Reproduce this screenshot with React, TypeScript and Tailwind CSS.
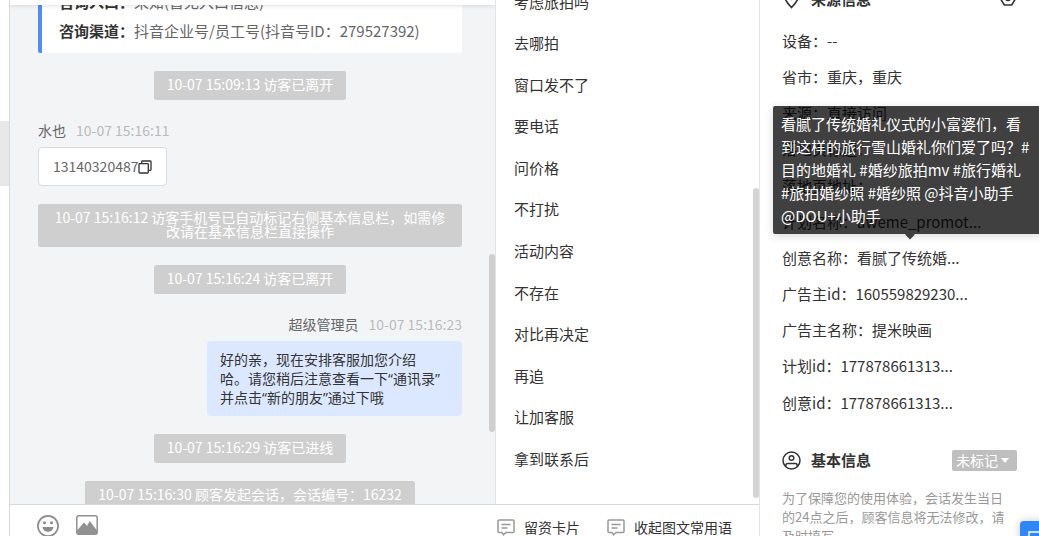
import React from "react";

const phrases = [
  "考虑旅拍吗",
  "去哪拍",
  "窗口发不了",
  "要电话",
  "问价格",
  "不打扰",
  "活动内容",
  "不存在",
  "对比再决定",
  "再追",
  "让加客服",
  "拿到联系后",
];

const sourceInfo = [
  ["设备：", "--"],
  ["省市：", "重庆，重庆"],
  ["来源：", "直接访问"],
  ["落地页标题：", ""],
  ["落地页地址：", "..."],
  ["计划名称：", "aweme_promot..."],
  ["创意名称：", "看腻了传统婚..."],
  ["广告主id：", "160559829230..."],
  ["广告主名称：", "提米映画"],
  ["计划id：", "177878661313..."],
  ["创意id：", "177878661313..."],
];

const tooltipLines = [
  "看腻了传统婚礼仪式的小富婆们，看",
  "到这样的旅行雪山婚礼你们爱了吗？#",
  "目的地婚礼 #婚纱旅拍mv #旅行婚礼",
  "#旅拍婚纱照 #婚纱照 @抖音小助手",
  "@DOU+小助手",
];

function SystemNote({ children }: { children: React.ReactNode }) {
  return (
    <p className="self-center rounded-[2px] bg-[#cfcfcf] px-[13px] pt-[6px] pb-[9px] text-center text-sm leading-[14px] text-white">
      {children}
    </p>
  );
}

function Quoted({ children }: { children: React.ReactNode }) {
  return (
    <>
      <span className="font-['Open_Sans',sans-serif]">“</span>
      {children}
      <span className="font-['Open_Sans',sans-serif]">”</span>
    </>
  );
}

function CopyIcon() {
  return (
    <svg width="14" height="14" viewBox="0 0 14 14" fill="none" stroke="#333" strokeWidth="1.3" aria-hidden="true">
      <rect x="1" y="3.7" width="9.3" height="9.3" rx="0.8" />
      <path d="M3.7 3.5V1.8a.8.8 0 0 1 .8-.8h7.7a.8.8 0 0 1 .8.8v7.7a.8.8 0 0 1-.8.8h-1.7" />
    </svg>
  );
}

function SmileIcon() {
  return (
    <svg width="22" height="22" viewBox="0 0 22 22" aria-hidden="true">
      <circle cx="11" cy="11" r="10.1" fill="none" stroke="#8c8c8c" strokeWidth="1.7" />
      <circle cx="7.5" cy="7.8" r="1.5" fill="#8c8c8c" />
      <circle cx="14.5" cy="7.8" r="1.5" fill="#8c8c8c" />
      <path d="M5.5 12h11c-.4 3-2.600 4.700-5.500 4.700S5.900 15 5.500 12z" fill="#8c8c8c" />
    </svg>
  );
}

function PictureIcon() {
  return (
    <svg width="22" height="20" viewBox="0 0 22 20" aria-hidden="true">
      <rect x="0.8" y="0.8" width="20.4" height="18.4" rx="2" fill="none" stroke="#919191" strokeWidth="1.500" />
      <path d="M1 15.500 8 7.500l3 3.500L13.800 6 21 15.500V18a1 1 0 0 1-1 1H2a1 1 0 0 1-1-1z" fill="#919191" />
    </svg>
  );
}

function CardIcon() {
  return (
    <svg width="18" height="17" viewBox="0 0 18 17" fill="none" stroke="#999" strokeWidth="1.500" aria-hidden="true">
      <path d="M2 1h14a1 1 0 0 1 1 1v10.500a1 1 0 0 1-1 1H9L6.500 15.800 5 13.500H2a1 1 0 0 1-1-1V2a1 1 0 0 1 1-1z" />
      <path d="M4.500 5.500h9M4.500 9h6" />
    </svg>
  );
}

function PinIcon() {
  return (
    <svg width="18" height="20" viewBox="0 0 18 20" fill="none" stroke="#333" strokeWidth="1.700" aria-hidden="true">
      <path d="M9.500 18.500C6.500 15.500 3 12 3 8a6.500 6.500 0 0 1 13 0c0 4-3.500 7.500-6.500 10.500z" />
      <circle cx="9.500" cy="8" r="2.300" />
    </svg>
  );
}

function HexIcon() {
  return (
    <svg width="18" height="16" viewBox="0 0 18 16" fill="none" stroke="#333" strokeWidth="1.600" aria-hidden="true">
      <path d="M5.300 1h7.400L17 8l-4.300 7H5.300L1 8z" />
      <circle cx="9" cy="8" r="2.400" />
    </svg>
  );
}

function UserIcon() {
  return (
    <svg width="19" height="19" viewBox="0 0 19 19" fill="none" stroke="#333" strokeWidth="1.500" aria-hidden="true">
      <circle cx="9.500" cy="9.500" r="8.500" />
      <circle cx="9.500" cy="7" r="2.300" />
      <path d="M3.800 15.500v-1c0-1.200.8-2 2-2h7.400c1.200 0 2 .8 2 2v1" />
    </svg>
  );
}

function Chat() {
  return (
    <section className="relative min-w-0 flex-1 overflow-hidden border-r border-[#e4e4e4] bg-[#f3f4f6]">
      <div className="absolute inset-x-0 top-0 z-10 h-[5px] bg-white shadow-[0_1px_4px_rgba(0,0,0,0.12)]" />
      <div className="-mt-3 flex flex-col gap-[18px] pr-[33px] pl-7">
        <div className="rounded-[2px] border-l-4 border-[#4f8ef7] bg-white pb-2 pl-[17px] text-[15px] leading-[28px] text-[#666]">
          <p>
            <b className="text-[#333]">咨询入口：</b>未知(暂无入口信息)
          </p>
          <p className="pt-px">
            <b className="text-[#333]">咨询渠道：</b>抖音企业号/员工号(抖音号ID：279527392)
          </p>
        </div>
        <SystemNote>10-07 15:09:13 访客已离开</SystemNote>
        <article className="flex flex-col items-start text-sm">
          <header className="mb-[5px] flex gap-[10px] leading-6">
            <span className="text-[#666]">水也</span>
            <time className="text-[#bbb]">10-07 15:16:11</time>
          </header>
          <div className="flex items-center rounded border border-[#dcdcdc] bg-white px-[14px] py-[9px] leading-[19px] text-[#666]">
            13140320487
            <button type="button" aria-label="复制" className="flex">
              <CopyIcon />
            </button>
          </div>
        </article>
        <SystemNote>10-07 15:16:12 访客手机号已自动标记右侧基本信息栏，如需修改请在基本信息栏直接操作</SystemNote>
        <SystemNote>10-07 15:16:24 访客已离开</SystemNote>
        <article className="flex flex-col items-end text-sm">
          <header className="mb-[5px] flex gap-[10px] leading-6">
            <span className="text-[#666]">超级管理员</span>
            <time className="text-[#bbb]">10-07 15:16:23</time>
          </header>
          <p className="w-[255px] rounded bg-[#dce8ff] py-[9px] pl-[13px] leading-[19px] text-[#333]">
            好的亲，现在安排客服加您介绍
            <br />
            哈。请您稍后注意查看一下<Quoted>通讯录</Quoted>
            <br />
            并点击<Quoted>新的朋友</Quoted>通过下哦
          </p>
        </article>
        <SystemNote>10-07 15:16:29 访客已进线</SystemNote>
        <SystemNote>10-07 15:16:30 顾客发起会话，会话编号：16232</SystemNote>
      </div>
      <div className="absolute top-[254px] right-0 h-[178px] w-[6px] rounded-full bg-[#cfcfcf]" />
    </section>
  );
}

function PhraseList() {
  return (
    <section className="relative w-[263px] shrink-0 overflow-hidden bg-white">
      <ul className="-mt-[19px] grid h-[499px] auto-rows-fr pl-[18px] text-[15px] text-[#333]">
        {phrases.map((phrase) => (
          <li key={phrase} className="flex items-center">
            {phrase}
          </li>
        ))}
      </ul>
      <div className="absolute top-[188px] right-0 h-[310px] w-[6px] rounded-full bg-[#d4d4d4]" />
    </section>
  );
}

function Toolbar() {
  return (
    <footer className="flex h-8 shrink-0 items-start justify-between overflow-hidden border-t border-[#d8d8d8] bg-white pr-[27px] pl-[27px] text-sm text-[#333]">
      <div className="flex gap-[17px] pt-[10px]">
        <button type="button" aria-label="表情" className="flex">
          <SmileIcon />
        </button>
        <button type="button" aria-label="图片" className="flex items-start">
          <PictureIcon />
        </button>
      </div>
      <div className="flex gap-[27px] pt-3 leading-5">
        <button type="button" className="flex items-center gap-[9px]">
          <CardIcon />
          留资卡片
        </button>
        <button type="button" className="flex items-center gap-[9px]">
          <CardIcon />
          收起图文常用语
        </button>
      </div>
    </footer>
  );
}

function InfoPanel() {
  return (
    <aside className="relative w-[280px] shrink-0 overflow-hidden border-l border-[#e4e4e4] bg-white pr-[22px] pl-[22px] text-[15px] text-[#333]">
      <header className="-mt-[25px] flex h-12 items-center">
        <PinIcon />
        <h2 className="ml-[11px] flex-1 font-bold">来源信息</h2>
        <button type="button" aria-label="设置" className="mb-[3px]">
          <HexIcon />
        </button>
      </header>
      <dl className="grid h-[398px] auto-rows-fr">
        {sourceInfo.map(([label, value]) => (
          <div key={label} className="flex items-center">
            <dt>{label}</dt>
            <dd>{value}</dd>
          </div>
        ))}
      </dl>
      <header className="mt-[15px] flex h-12 items-center">
        <UserIcon />
        <h2 className="ml-[10px] flex-1 font-bold">基本信息</h2>
        <button
          type="button"
          className="flex h-[21px] items-center gap-[3px] rounded-[2px] bg-[#bfbfbf] px-1 text-sm text-white"
        >
          未标记
          <svg width="8" height="5" viewBox="0 0 8 5" fill="#fff" aria-hidden="true" className="mr-1">
            <path d="M0 0h8L4 5z" />
          </svg>
        </button>
      </header>
      <p className="mt-1 text-[13px] leading-[19px] text-[#999]">
        为了保障您的使用体验，会话发生当日
        <br />
        的24点之后，顾客信息将无法修改，请
        <br />
        及时填写
      </p>
      <div
        role="tooltip"
        className="absolute top-[106px] left-[13px] w-[274px] rounded-[2px] bg-black/75 px-2 pt-[6px] pb-[7px] leading-[23px] whitespace-nowrap text-white shadow-[0_2px_8px_rgba(0,0,0,0.15)]"
      >
        {tooltipLines.map((line) => (
          <p key={line}>{line}</p>
        ))}
        <svg
          width="12"
          height="6"
          viewBox="0 0 12 6"
          fill="#404040"
          aria-hidden="true"
          className="absolute top-full left-1/2 -translate-x-1/2"
        >
          <path d="M1.500 0h9v1L6 5.500 1.500 1z" />
        </svg>
      </div>
      <button
        type="button"
        aria-label="在线客服"
        className="absolute -right-5 -bottom-6 flex h-[39px] w-[39px] items-start rounded bg-[#2f86f6] pt-[10px] pl-2 shadow-[0_0_10px_rgba(0,0,0,0.2)]"
      >
        <svg width="22" height="20" viewBox="0 0 22 20" fill="none" stroke="#fff" strokeWidth="1.500" aria-hidden="true" className="shrink-0">
          <rect x="1" y="1" width="20" height="16" />
        </svg>
      </button>
    </aside>
  );
}

export default function App() {
  return (
    <div className="flex h-screen overflow-hidden bg-white font-['Noto_Sans_CJK_SC',sans-serif]">
      <div className="w-[10px] shrink-0 border-r border-[#d8d8d8] pt-[121px]">
        <div className="h-[65px] bg-[#e8e8e8]" />
      </div>
      <main className="flex min-w-0 flex-1 flex-col">
        <div className="flex min-h-0 flex-1">
          <Chat />
          <PhraseList />
        </div>
        <Toolbar />
      </main>
      <InfoPanel />
    </div>
  );
}
